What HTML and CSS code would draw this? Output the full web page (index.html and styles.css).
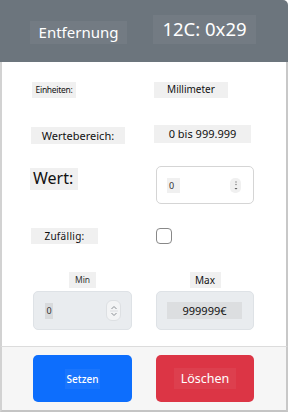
FILE: index.html
```html
<!DOCTYPE html>
<html lang="de">
<head>
    <meta charset="UTF-8">
    <meta name="viewport" content="width=device-width, initial-scale=1.0">
    <title>Entfernung</title>
    <link rel="stylesheet" href="styles.css">
</head>
<body>
    <div class="frame">
        <div class="header">
            <span class="title">Entfernung</span>
            <span class="addr">12C: 0x29</span>
        </div>

        <div class="content">
            <div class="row row-units">
                <span class="tag tag-units">Einheiten:</span>
                <span class="tag tag-mm">Millimeter</span>
            </div>
            <div class="row row-range">
                <span class="tag tag-range">Wertebereich:</span>
                <span class="tag tag-range-val">0 bis 999.999</span>
            </div>
            <div class="row row-value">
                <span class="tag tag-wert">Wert:</span>
                <div class="num-input">
                    <span class="num-text">0</span>
                    <span class="spin-small">
                        <svg width="6" height="12" viewBox="0 0 6 12">
                            <circle cx="3" cy="3" r="0.7" fill="#777"/>
                            <circle cx="3" cy="5.5" r="0.7" fill="#777"/>
                            <path d="M1.5 9 L4.5 9 L3 10.5 Z" fill="#555"/>
                        </svg>
                    </span>
                </div>
            </div>
            <div class="row row-random">
                <span class="tag tag-random">Zufällig:</span>
                <span class="checkbox"></span>
            </div>
            <div class="row row-minmax">
                <div class="col">
                    <span class="tag tag-min">Min</span>
                    <div class="box-input">
                        <span class="min-text">0</span>
                        <span class="spin-big">
                            <svg width="12" height="18" viewBox="0 0 12 18">
                                <path d="M3.5 7 L6 4.5 L8.5 7" fill="none" stroke="#8a8f94" stroke-width="1"/>
                                <path d="M3.5 11 L6 13.5 L8.5 11" fill="none" stroke="#8a8f94" stroke-width="1"/>
                                <line x1="2" y1="9" x2="10" y2="9" stroke="#d6d9dc" stroke-width="0.8"/>
                            </svg>
                        </span>
                    </div>
                </div>
                <div class="col">
                    <span class="tag tag-max">Max</span>
                    <div class="box-input">
                        <span class="max-text">999999€</span>
                    </div>
                </div>
            </div>
        </div>

        <div class="footer">
            <button class="btn btn-blue"><span>Setzen</span></button>
            <button class="btn btn-red"><span>Löschen</span></button>
        </div>
    </div>
</body>
</html>
```

FILE: styles.css
```css
body {
    margin: 0;
    font-family: "Noto Sans", "Open Sans", Arial, sans-serif;
    background: #fff;
}
.frame {
    width: 288px;
    height: 412px;
    display: flex;
    flex-direction: column;
    border-top-right-radius: 5px;
    overflow: hidden;
}

/* cabecera */
.header {
    height: 62px;
    flex: none;
    background-color: #6c757d;
    display: flex;
    align-items: flex-end;
    padding: 0 0 18px 30px;
    box-sizing: border-box;
    color: #fff;
}
.title {
    width: 97px;
    height: 23px;
    line-height: 23px;
    font-size: 15px;
    text-align: center;
    background-color: #737b83;
}
.addr {
    margin-left: 26px;
    width: 103px;
    height: 29px;
    line-height: 28px;
    font-size: 18.5px;
    text-align: center;
    background-color: #737b83;
}

/* contenido */
.content {
    flex: 1;
    border-left: 2px solid #d2d2d2;
    border-right: 2px solid #c8c8c8;
    padding: 20px 0 0 31px;
    display: flex;
    flex-direction: column;
}
.row {
    display: grid;
    grid-template-columns: 99px 98px;
    column-gap: 24px;
    align-items: start;
}
.tag {
    display: inline-block;
    background-color: #f0f0f0;
    color: #111;
    text-align: center;
    justify-self: start;
}
.tag-units {
    width: 44px;
    height: 16px;
    line-height: 16px;
    font-size: 8.5px;
    margin-left: -1px;
    letter-spacing: -0.3px;
}
.tag-mm {
    width: 74px;
    height: 16px;
    line-height: 15px;
    font-size: 10px;
    margin-left: -2px;
}
.row-range {
    margin-top: 27px;
}
.tag-range {
    width: 94px;
    height: 17px;
    line-height: 17px;
    font-size: 11px;
    margin-top: 2px;
    margin-left: -2px;
}
.tag-range-val {
    width: 97px;
    height: 18px;
    line-height: 17px;
    font-size: 11px;
    margin-left: -2px;
}
.row-value {
    margin-top: 22px;
}
.tag-wert {
    width: 48px;
    height: 22px;
    line-height: 20px;
    font-size: 16px;
    text-align: left;
    padding-left: 3px;
    box-sizing: border-box;
    margin-top: 2px;
    margin-left: -3px;
}
.num-input {
    width: 98px;
    height: 38px;
    box-sizing: border-box;
    border: 1px solid #d5d5d5;
    border-radius: 5px;
    display: flex;
    align-items: center;
    padding: 0 12px 0 10px;
    justify-content: space-between;
}
.num-text {
    background-color: #f0f0f0;
    font-size: 9px;
    width: 13px;
    height: 15px;
    line-height: 15px;
    padding-left: 2px;
    box-sizing: border-box;
    color: #333;
}
.spin-small {
    width: 11px;
    height: 15px;
    background-color: #f0f0f0;
    border-radius: 5px;
    display: flex;
    align-items: center;
    justify-content: center;
}
.row-random {
    margin-top: 24px;
}
.tag-random {
    width: 67px;
    height: 16px;
    line-height: 16px;
    font-size: 10px;
    letter-spacing: 0.3px;
    margin-left: -2px;
}
.checkbox {
    width: 16px;
    height: 16px;
    box-sizing: border-box;
    border: 1px solid #888;
    border-radius: 4px;
    background: #fff;
}
.row-minmax {
    margin-top: 28px;
}
.col {
    display: flex;
    flex-direction: column;
    align-items: center;
}
.tag-min {
    width: 27px;
    height: 16px;
    line-height: 16px;
    font-size: 8.5px;
    color: #333;
}
.tag-max {
    width: 31px;
    height: 16px;
    line-height: 16px;
    font-size: 10px;
}
.box-input {
    margin-top: 3px;
    width: 99px;
    height: 39px;
    box-sizing: border-box;
    background-color: #e9ecef;
    border: 1px solid #dee2e6;
    border-radius: 5px;
    display: flex;
    align-items: center;
}
.row-minmax .col:last-child .box-input {
    width: 98px;
}
.min-text {
    margin-left: 11px;
    width: 8px;
    height: 16px;
    line-height: 16px;
    font-size: 9px;
    background-color: #d8dadc;
    color: #333;
    text-align: center;
}
.spin-big {
    margin-left: 53px;
    width: 13px;
    height: 19px;
    background-color: #f3f4f5;
    border: 1px solid #dde0e3;
    border-radius: 6px;
    display: flex;
    align-items: center;
    justify-content: center;
}
.max-text {
    margin-left: 10px;
    width: 75px;
    height: 17px;
    line-height: 17px;
    font-size: 11px;
    text-align: center;
    background-color: #dcdee0;
    color: #111;
}

/* pie */
.footer {
    height: 66px;
    flex: none;
    box-sizing: border-box;
    background-color: #f6f6f6;
    border-top: 1px solid #dcdcdc;
    border-left: 2px solid #d2d2d2;
    border-right: 2px solid #c8c8c8;
    border-bottom: 2px solid #c4c4c4;
    padding: 8px 0 0 31px;
    display: flex;
    gap: 24px;
    align-items: flex-start;
}
.btn {
    height: 47px;
    border: none;
    border-radius: 5px;
    color: #fff;
    font-family: "Noto Sans", Arial, sans-serif;
    padding: 0;
    display: flex;
    align-items: center;
    justify-content: center;
}
.btn span {
    background-color: rgba(255, 255, 255, 0.05);
    padding: 3px 2px;
}
.btn-blue {
    width: 99px;
    background-color: #0d6efd;
    font-size: 10px;
    font-weight: 500;
}
.btn-red {
    width: 98px;
    background-color: #dc3545;
    font-size: 12.5px;
}
.btn-red span {
    padding: 2px 7px;
}
```
